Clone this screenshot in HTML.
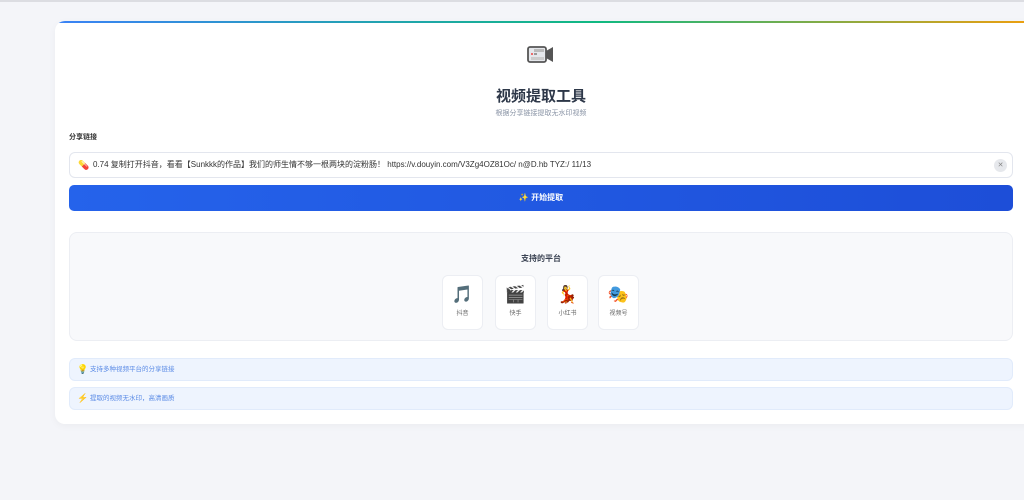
<!DOCTYPE html>
<html><head><meta charset="utf-8"><style>
*{box-sizing:border-box;margin:0;padding:0}
body{width:1024px;height:500px;overflow:hidden;background:#f4f5f9;font-family:"Liberation Sans","Noto Sans CJK SC",sans-serif;position:relative}
.topline{position:absolute;left:0;top:0;width:1024px;height:2px;background:#dcdde2}
.card{position:absolute;left:55px;top:21px;width:990px;height:403px;background:#fff;border-radius:10px;overflow:hidden;box-shadow:0 2px 8px rgba(0,0,0,.04)}
.bar{position:absolute;left:0;top:0;right:0;height:2px;background:linear-gradient(90deg,#3b82f6,#10b981 55%,#f59e0b)}
.abs{position:absolute}
h1{position:absolute;left:0;width:972px;top:66px;text-align:center;font-size:15px;font-weight:bold;color:#2d3748;line-height:20px}
.sub{position:absolute;left:0;width:972px;top:88px;text-align:center;font-size:7px;color:#8a94a6;line-height:10px}
.lbl{left:14px;top:112px;font-size:7px;color:#333;font-weight:bold;line-height:10px}
.inp{left:14px;top:131px;width:944px;height:26px;border:1px solid #e3e6ee;border-radius:6px;font-size:8px;color:#333;padding-left:23px;line-height:24px}
.btn{left:14px;top:164px;width:944px;height:26px;border-radius:5px;background:linear-gradient(90deg,#2563eb,#1d4ed8);color:#fff;font-size:8px;font-weight:bold;text-align:center;line-height:26px}
.plat{left:14px;top:211px;width:944px;height:109px;border:1px solid #eceef3;border-radius:8px;background:#f8f9fb}
.pt{position:absolute;left:0;width:942px;top:20px;text-align:center;font-size:8px;font-weight:bold;color:#3a4252;line-height:12px}
.it{position:absolute;top:42px;width:41px;height:55px;background:#fff;border:1px solid #eceef3;border-radius:6px;text-align:center}
.it .e{font-size:17px;margin-top:9px;line-height:20px}
.it .t{font-size:6px;color:#666;margin-top:5px;line-height:8px}
.tip{left:14px;width:944px;height:23px;border:1px solid #e1ebfb;border-radius:6px;background:#eef4fe;font-size:6.5px;color:#5b8be6;padding-left:20px;line-height:21px}
.tip span{position:absolute;left:7px;top:0;font-size:9px;line-height:21px}
</style></head><body>
<div class="topline"></div>
<div class="card"><div class="bar"></div>
<svg class="abs" style="left:472px;top:23px" width="28" height="22" viewBox="0 0 28 22"><rect x="1" y="3" width="18" height="15" rx="2" fill="#e5e7eb" stroke="#555" stroke-width="1.8"/><path d="M19 7l7-4v15l-7-4z" fill="#555"/><rect x="7" y="5" width="10" height="3" fill="#bbb"/><circle cx="5" cy="10" r="1" fill="#ef4444"/><rect x="7" y="9" width="3" height="2" fill="#999"/><rect x="4" y="13" width="13" height="3" fill="#ccc"/></svg>
<h1>视频提取工具</h1>
<div class="sub">根据分享链接提取无水印视频</div>
<div class="abs lbl">分享链接</div>
<div class="abs inp"><span style="position:absolute;left:8px;top:0;font-size:9px;line-height:24px">💊</span>0.74 复制打开抖音，看看【Sunkkk的作品】我们的师生情不够一根两块的淀粉肠！ https://v.douyin.com/V3Zg4OZ81Oc/ n@D.hb TYZ:/ 11/13<span style="position:absolute;right:5px;top:6px;width:13px;height:13px;border-radius:50%;background:#e6e8ec;color:#888;font-size:7px;line-height:13px;text-align:center">✕</span></div>
<div class="abs btn">✨ 开始提取</div>
<div class="abs plat"><div class="pt">支持的平台</div>
<div class="it" style="left:372px"><div class="e">🎵</div><div class="t">抖音</div></div>
<div class="it" style="left:425px"><div class="e">🎬</div><div class="t">快手</div></div>
<div class="it" style="left:477px"><div class="e">💃</div><div class="t">小红书</div></div>
<div class="it" style="left:528px"><div class="e">🎭</div><div class="t">视频号</div></div>
</div>
<div class="abs tip" style="top:337px"><span>💡</span>支持多种视频平台的分享链接</div>
<div class="abs tip" style="top:366px"><span>⚡</span>提取的视频无水印，高清画质</div>
</div>
</body></html>
